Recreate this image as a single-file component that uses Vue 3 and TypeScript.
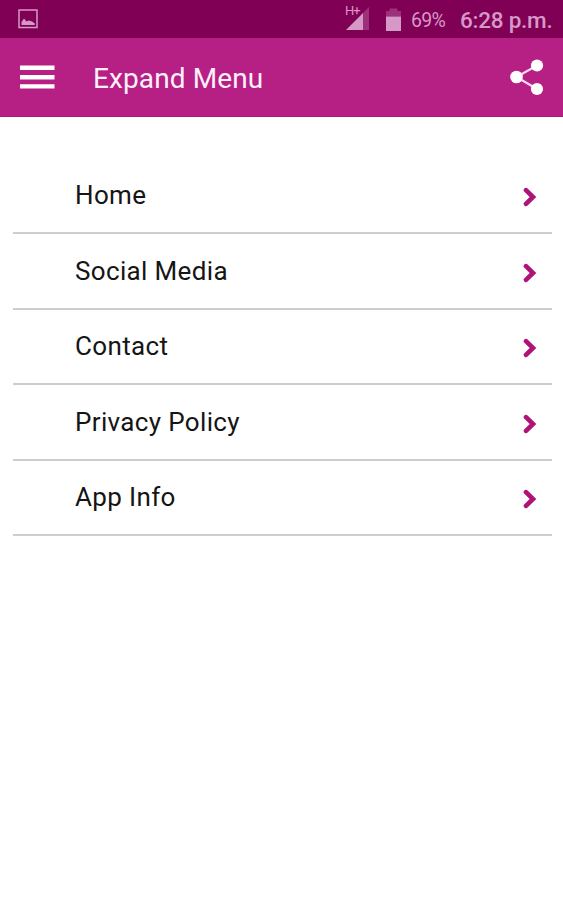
<script setup lang="ts">
interface MenuItem {
  id: string
  label: string
}

const items: MenuItem[] = [
  { id: 'home', label: 'Home' },
  { id: 'social', label: 'Social Media' },
  { id: 'contact', label: 'Contact' },
  { id: 'privacy', label: 'Privacy Policy' },
  { id: 'info', label: 'App Info' },
]
</script>

<template>
  <div class="screen">
    <div class="status">
      <svg class="picture" width="20" height="20" viewBox="0 0 20 20">
        <rect x="1" y="1" width="18" height="17.5" fill="none" stroke="currentColor" stroke-width="1.5" />
        <path d="M3.5 16V13L6 9.5L8.5 12.5L11 11.5L14 12.5L16.8 14.5V16Z" fill="currentColor" />
      </svg>
      <div class="network">
        <span class="network-type">H+</span>
        <svg class="signal" width="23" height="23" viewBox="0 0 23 23">
          <path d="M17 6L23 0V23H17Z" fill="currentColor" opacity=".32" />
          <path d="M0 23L17 6V23Z" fill="currentColor" />
        </svg>
      </div>
      <svg class="battery" width="15" height="23" viewBox="0 0 15 23">
        <path d="M0 3H3.5V0.5H11.5V3H15V8.5H0Z" fill="currentColor" opacity=".32" />
        <path d="M0 8.5H15V23H0Z" fill="currentColor" />
      </svg>
      <span class="percent">69%</span>
      <span class="time">6:28 p.m.</span>
    </div>
    <header class="bar">
      <button class="icon-button" aria-label="Menu">
        <svg width="36" height="26" viewBox="0 0 36 26">
          <path d="M1 3.8H35.5M1 13.2H35.5M1 22.4H35.5" stroke="#fff" stroke-width="4.4" />
        </svg>
      </button>
      <h1 class="title">Expand Menu</h1>
      <button class="icon-button share" aria-label="Share">
        <svg width="34" height="38" viewBox="0 0 34 38">
          <path d="M27 7.5L6.5 19L27 31" fill="none" stroke="#ffd6f0" stroke-width="2.2" />
          <circle cx="27" cy="7.5" r="6.1" fill="#fff" />
          <circle cx="6.5" cy="19" r="6.3" fill="#fff" />
          <circle cx="27" cy="31" r="6.1" fill="#fff" />
        </svg>
      </button>
    </header>
    <ul class="menu">
      <li v-for="item in items" :key="item.id" class="item">
        <span class="label">{{ item.label }}</span>
        <svg class="chevron" width="14" height="20" viewBox="0 0 14 20">
          <path d="M3 3.2L10 10L3 16.8" fill="none" stroke="#b01378" stroke-width="4.6" stroke-linecap="round" />
        </svg>
      </li>
    </ul>
  </div>
</template>

<style>
body {
  margin: 0;
  background: #fff;
}
</style>

<style scoped>
.screen {
  height: 900px;
  overflow: hidden;
  background: #fff;
  font-family: Roboto, "Liberation Sans", sans-serif;
}
.status {
  box-sizing: border-box;
  height: 38px;
  padding: 0 11px 0 18px;
  display: flex;
  align-items: center;
  background: #800055;
  color: #d698c6;
}
.network {
  margin-left: auto;
  width: 24px;
  height: 30px;
  position: relative;
}
.network-type {
  position: absolute;
  left: 0;
  top: 0;
  font-size: 13px;
  line-height: 13px;
  letter-spacing: -1px;
}
.signal {
  position: absolute;
  left: 1px;
  bottom: 4px;
}
.battery {
  margin-left: 17px;
}
.percent {
  margin: 3px 0 0 10px;
  width: 49px;
  font-size: 19.5px;
  letter-spacing: -0.7px;
}
.time {
  margin-top: 1px;
  width: 92px;
  font-size: 22.5px;
  font-weight: 500;
  letter-spacing: -0.25px;
  white-space: nowrap;
}
.bar {
  box-sizing: border-box;
  height: 79px;
  padding: 0 19px 0 19px;
  display: flex;
  align-items: center;
  background: #b61f84;
  border-bottom: 1px solid #b0187d;
}
.icon-button {
  display: flex;
  padding: 0;
  border: 0;
  background: none;
}
.title {
  margin: 3px 0 0 38px;
  font-size: 28px;
  font-weight: 400;
  line-height: 34px;
  letter-spacing: 0.1px;
  color: #fff0fa;
  white-space: nowrap;
}
.share {
  margin-left: auto;
}
.menu {
  list-style: none;
  margin: 0;
  padding: 41.5px 11px 0 13px;
}
.item {
  box-sizing: border-box;
  height: 75.5px;
  padding: 1px 15px 0 62px;
  display: flex;
  align-items: center;
  justify-content: space-between;
  border-bottom: 2px solid #cdcdcd;
}
.label {
  margin-top: -1px;
  font-size: 26px;
  line-height: 32px;
  letter-spacing: 0.35px;
  color: #151515;
}
.chevron {
  margin-top: 2.5px;
}
</style>
